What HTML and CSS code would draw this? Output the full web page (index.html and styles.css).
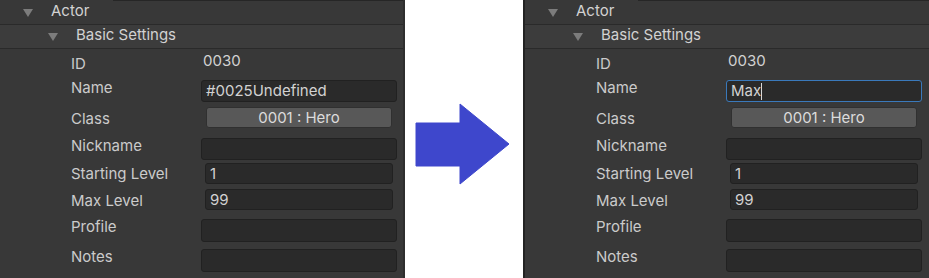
FILE: index.html
```html
<!DOCTYPE html>
<html lang="en">
<head>
  <meta charset="UTF-8" />
  <title>Actor name edit</title>
  <link rel="stylesheet" href="styles.css">
</head>
<body>
  <div class="compare">

    <!-- before -->
    <div class="inspector inspector-before">
      <div class="foldout foldout-top"><span class="caret"></span>Actor</div>
      <div class="foldout foldout-sub"><span class="caret"></span>Basic Settings</div>
      <div class="field-row row-id"><span class="label">ID</span><span class="value">0030</span></div>
      <div class="field-row row-name"><span class="label">Name</span><div class="text-field">#0025Undefined</div></div>
      <div class="field-row row-class"><span class="label">Class</span><div class="popup">0001 : Hero</div></div>
      <div class="field-row row-nick"><span class="label">Nickname</span><div class="text-field"></div></div>
      <div class="field-row row-start"><span class="label">Starting Level</span><div class="text-field number">1</div></div>
      <div class="field-row row-max"><span class="label">Max Level</span><div class="text-field number">99</div></div>
      <div class="field-row row-profile"><span class="label">Profile</span><div class="text-field tall"></div></div>
      <div class="field-row row-notes"><span class="label">Notes</span><div class="text-field tall"></div></div>
    </div>

    <div class="arrow-gap">
      <svg width="118" height="278" viewBox="0 0 118 278">
        <polygon points="11,123 55,123 55,104 104,144 55,184 55,166 11,166" fill="#3e47cc" stroke="#3e47cc" stroke-width="1" stroke-linejoin="round" />
      </svg>
    </div>

    <!-- after -->
    <div class="inspector inspector-after">
      <div class="foldout foldout-top"><span class="caret"></span>Actor</div>
      <div class="foldout foldout-sub"><span class="caret"></span>Basic Settings</div>
      <div class="field-row row-id"><span class="label">ID</span><span class="value">0030</span></div>
      <div class="field-row row-name"><span class="label">Name</span><div class="text-field focused">Max<span class="cursor"></span></div></div>
      <div class="field-row row-class"><span class="label">Class</span><div class="popup">0001 : Hero</div></div>
      <div class="field-row row-nick"><span class="label">Nickname</span><div class="text-field"></div></div>
      <div class="field-row row-start"><span class="label">Starting Level</span><div class="text-field number">1</div></div>
      <div class="field-row row-max"><span class="label">Max Level</span><div class="text-field number">99</div></div>
      <div class="field-row row-profile"><span class="label">Profile</span><div class="text-field tall"></div></div>
      <div class="field-row row-notes"><span class="label">Notes</span><div class="text-field tall"></div></div>
    </div>

  </div>
</body>
</html>
```

FILE: styles.css
```css
body {
  margin: 0;
  background: #fff;
  font-family: Inter, "Noto Sans", sans-serif;
  font-size: 15px;
  line-height: 17px;
}

.compare {
  display: flex;
  height: 278px;
}

/* inspector panel */
.inspector {
  background: #383838;
  color: #cbcbcb;
  height: 278px;
  overflow: hidden;
}

.inspector-before {
  width: 403px;
  border-right: 2px solid #2e2e2e;
}

.inspector-after {
  flex: 1;
  border-left: 2px solid #232323;
}

.arrow-gap {
  width: 118px;
  background: #fff;
}

.arrow-gap svg {
  display: block;
}

/* foldout headers */
.foldout {
  display: flex;
  align-items: flex-start;
  color: #d2d2d2;
  border-bottom: 1px solid #2a2a2a;
}

.foldout-top {
  height: 22px;
  padding-top: 2px;
  padding-left: 23px;
  background: linear-gradient(to right, transparent 113px, #262626 113px) top / 100% 1px no-repeat;
}

.foldout-sub {
  height: 22px;
  padding-top: 1px;
  padding-left: 48px;
  background-color: #3c3c3c;
}

.caret {
  width: 0;
  height: 0;
  border-left: 5px solid transparent;
  border-right: 5px solid transparent;
  border-top: 8px solid #7c7c7c;
  margin-top: 7px;
  margin-right: 18px;
}

/* property rows */
.field-row {
  display: flex;
  align-items: flex-start;
  padding-left: 71px;
}

.label {
  width: 130px;
  flex-shrink: 0;
}

.value {
  color: #d2d2d2;
  padding-left: 2px;
}

.text-field {
  box-sizing: border-box;
  width: 196px;
  height: 22px;
  padding: 0 4px;
  line-height: 20px;
  background: #2a2a2a;
  border: 1px solid #212121;
  border-radius: 3px;
  color: #d2d2d2;
}

.text-field.number {
  width: 188px;
  height: 21px;
  margin-left: 4px;
  line-height: 19px;
}

.text-field.tall {
  height: 23px;
}

.text-field.focused {
  border-color: #3a79bb;
}

.cursor {
  display: inline-block;
  width: 1px;
  height: 17px;
  background: #d8d8d8;
  vertical-align: -4px;
}

.popup {
  box-sizing: border-box;
  width: 186px;
  height: 21px;
  margin-left: 5px;
  line-height: 19px;
  text-align: center;
  background: #585858;
  border: 1px solid #303030;
  border-radius: 3px;
  color: #dcdcdc;
}

.row-id { height: 29px; }
.row-id .label { padding-top: 6px; }
.row-id .value { padding-top: 3px; }

.row-name { height: 27px; }
.row-name .label { padding-top: 1px; }
.row-name .text-field { margin-top: 2px; }

.row-class { height: 30px; }
.row-class .label { padding-top: 5px; }
.row-class .popup { margin-top: 2px; }

.row-nick { height: 26px; }
.row-nick .label { padding-top: 2px; }
.row-nick .text-field { margin-top: 3px; }

.row-start { height: 26px; }
.row-start .label { padding-top: 4px; }
.row-start .text-field { margin-top: 2px; }

.row-max { height: 28px; }
.row-max .label { padding-top: 5px; }
.row-max .text-field { margin-top: 2px; }

.row-profile { height: 31px; }
.row-profile .label { padding-top: 3px; }
.row-profile .text-field { margin-top: 4px; }

.row-notes { height: 32px; }
.row-notes .label { padding-top: 2px; }
.row-notes .text-field { margin-top: 3px; }
```
